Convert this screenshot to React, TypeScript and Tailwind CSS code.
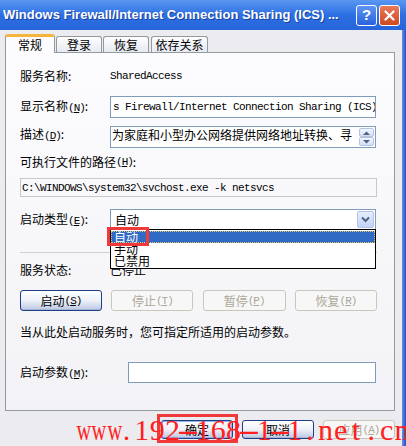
import type { ReactNode } from "react";

// XP 风格的服务属性对话框（常规页）
const mono = "font-['Liberation_Mono',monospace] text-[11px] tracking-[-0.6px]";

function Key({ k }: { k: string }) {
  return (
    <span className="font-['Liberation_Mono',monospace] text-[11px] tracking-[-1px]">
      (<span className="underline underline-offset-1">{k}</span>)
    </span>
  );
}

function XpButton({
  children,
  disabled = false,
  isDefault = false,
  className = "",
}: {
  children: ReactNode;
  disabled?: boolean;
  isDefault?: boolean;
  className?: string;
}) {
  if (disabled) {
    return (
      <div
        className={`flex items-center justify-center rounded-[3px] border border-[#c9c7ba] bg-[#f7f7f7] text-[#aca899] ${className}`}
      >
        {children}
      </div>
    );
  }
  return (
    <div
      className={`flex items-center justify-center rounded-[3px] border border-[#1d3f86] bg-gradient-to-b from-[#ffffff] via-[#eef1f8] to-[#bcc7e2] text-black ${
        isDefault ? "shadow-[inset_0_0_0_1px_#8fb1ec]" : "shadow-[inset_0_-1px_0_#a9b6d6]"
      } ${className}`}
    >
      {children}
    </div>
  );
}

function ScrollBtn({ up }: { up: boolean }) {
  return (
    <div className="flex h-[9px] w-[15px] items-center justify-center rounded-[2px] border border-[#b3c3e6] bg-gradient-to-b from-[#f2f6ff] to-[#d4def4]">
      <svg width="7" height="4" viewBox="0 0 7 4">
        {up ? <path d="M0 4 L3.5 0.5 L7 4 Z" fill="#4d6185" /> : <path d="M0 0 L3.5 3.5 L7 0 Z" fill="#4d6185" />}
      </svg>
    </div>
  );
}

function Watermark() {
  const chars = "www.192-168-1-1.net.cn".split("");
  return (
    <div className="pointer-events-none absolute left-[73px] top-[415px] flex whitespace-nowrap font-['Liberation_Serif',serif] text-[30px] leading-[30px] text-[#ff1f1f]">
      {chars.map((c, i) => (
        <span key={i} className="inline-block w-[15.3px] text-center">
          {c === "w" ? (
            <span className="inline-block scale-x-[0.68]">w</span>
          ) : c === "-" ? (
            <span className="inline-block scale-x-[2.3]">-</span>
          ) : (
            c
          )}
        </span>
      ))}
    </div>
  );
}

export default function App() {
  return (
    <div className="relative h-[446px] w-[406px] overflow-hidden bg-[#ecebef] font-['Noto_Sans_CJK_SC',sans-serif] text-[12px] leading-[16px] text-black">
      {/* 标题栏 */}
      <div className="flex h-[30px] items-center bg-gradient-to-b from-[#5a97f2] via-[#2c6fe2] to-[#2765da] pl-[3px] pr-[6px]">
        <div className="flex-1 truncate font-['Liberation_Sans',sans-serif] text-[13px] font-bold text-white [text-shadow:1px_1px_0_#1a3f9a]">
          Windows Firewall/Internet Connection Sharing (ICS) ...
        </div>
        <div className="flex gap-[2px]">
          <div className="flex h-[21px] w-[21px] items-center justify-center rounded-[3px] border border-white bg-gradient-to-b from-[#5d94f2] to-[#2a62dc] font-['Liberation_Sans',sans-serif] text-[15px] font-bold text-white">
            ?
          </div>
          <div className="flex h-[21px] w-[21px] items-center justify-center rounded-[3px] border border-white bg-gradient-to-b from-[#e87a58] to-[#cf4720]">
            <svg width="11" height="11" viewBox="0 0 11 11">
              <path d="M1.5 1.5 L9.5 9.5 M9.5 1.5 L1.5 9.5" stroke="white" strokeWidth="2.2" strokeLinecap="round" />
            </svg>
          </div>
        </div>
      </div>

      <div className="flex h-[416px]">
        <div className="flex w-[402px] flex-col">
          {/* 选项卡 */}
          <div className="relative z-10 mt-[3px] flex h-[19px] items-end pl-[5px]">
            <div className="-mb-px flex h-[19px] w-[50px] items-center justify-center rounded-t-[3px] border border-b-0 border-[#919b9c] border-t-[3px] border-t-[#f5b53c] bg-[#fcfcfe] pb-[1px]">
              常规
            </div>
            <div className="ml-px flex h-[16px] w-[46px] items-center justify-center rounded-t-[3px] border border-b-0 border-[#919b9c] bg-gradient-to-b from-white to-[#e6e9f2]">
              登录
            </div>
            <div className="ml-px flex h-[16px] w-[46px] items-center justify-center rounded-t-[3px] border border-b-0 border-[#919b9c] bg-gradient-to-b from-white to-[#e6e9f2]">
              恢复
            </div>
            <div className="ml-[2px] flex h-[16px] w-[57px] items-center justify-center rounded-t-[3px] border border-b-0 border-[#919b9c] bg-gradient-to-b from-white to-[#e6e9f2]">
              依存关系
            </div>
          </div>

          {/* 面板 */}
          <div className="ml-[5px] flex h-[359px] w-[390px] flex-col border border-[#919b9c] bg-gradient-to-b from-[#fcfcfe] to-[#f3f3f7] pl-[14px] pr-[17px]">
            <div className="mt-[15px] flex h-[16px] items-center">
              <div className="w-[90px]">服务名称:</div>
              <div className={mono}>SharedAccess</div>
            </div>

            <div className="mt-[12px] flex items-center">
              <div className="w-[90px]">
                显示名称<Key k="N" />:
              </div>
              <div className={`flex h-[22px] w-[266px] items-center overflow-hidden whitespace-nowrap border border-[#7f9db9] bg-white pl-[2px] ${mono}`}>
                s Firewall/Internet Connection Sharing (ICS)
              </div>
            </div>

            <div className="mt-[8px] flex items-start">
              <div className="w-[90px] pt-[-1px]">
                描述<Key k="D" />:
              </div>
              <div className="flex h-[22px] w-[266px] border border-[#7f9db9] bg-white">
                <div className="flex-1 overflow-hidden whitespace-nowrap pl-[1px] pt-px leading-[14px]">
                  为家庭和小型办公网络提供网络地址转换、寻
                </div>
                <div className="flex w-[16px] flex-col justify-between py-px">
                  <ScrollBtn up />
                  <ScrollBtn up={false} />
                </div>
              </div>
            </div>

            <div className="mt-[6px] flex h-[16px] items-center">
              可执行文件的路径<Key k="H" />:
            </div>

            <div className={`mt-[8px] flex h-[19px] items-center border border-[#c8c8cc] pl-px ${mono}`}>
              C:\WINDOWS\system32\svchost.exe -k netsvcs
            </div>

            <div className="mt-[12px] flex items-center">
              <div className="w-[90px]">
                启动类型<Key k="E" />:
              </div>
              <div className="relative flex h-[21px] w-[266px] border border-[#7f9db9] bg-white">
                <div className="flex flex-1 items-center pl-[4px]">自动</div>
                <div className="m-px flex w-[17px] items-center justify-center rounded-[2px] border border-[#b3c3e6] bg-gradient-to-b from-[#e6eeff] to-[#c3d3f6]">
                  <svg width="9" height="7" viewBox="0 0 9 7">
                    <path d="M1 1.5 L4.5 5 L8 1.5" stroke="#4d6185" strokeWidth="2" fill="none" />
                  </svg>
                </div>

                {/* 下拉列表 */}
                <div className="absolute left-[-1px] top-[19px] z-20 flex w-[266px] flex-col border border-black bg-white py-px leading-[12px]">
                  <div className="h-[12px] bg-[#316ac5] pl-[3px] text-white outline-1 -outline-offset-1 outline-dotted outline-[#e8c86a]">
                    自动
                  </div>
                  <div className="h-[12px] pl-[3px]">手动</div>
                  <div className="h-[12px] pl-[3px]">已禁用</div>
                </div>
                <div className="absolute left-[-4px] top-[17px] z-30 h-[19px] w-[42px] border-[3px] border-[#f03a3a]" />
              </div>
            </div>

            <div className="mt-[22px] h-px bg-[#cfcfd4]" />

            <div className="mt-[9px] flex h-[16px] items-center">
              <div className="w-[90px]">服务状态:</div>
              <div>已停止</div>
            </div>

            <div className="mt-[12px] flex h-[21px] justify-between">
              <XpButton className="w-[82px]">
                启动<Key k="S" />
              </XpButton>
              <XpButton disabled className="w-[82px]">
                停止<Key k="T" />
              </XpButton>
              <XpButton disabled className="w-[83px]">
                暂停<Key k="P" />
              </XpButton>
              <XpButton disabled className="w-[82px]">
                恢复<Key k="R" />
              </XpButton>
            </div>

            <div className="mt-[13px] flex h-[16px] items-center">当从此处启动服务时，您可指定所适用的启动参数。</div>

            <div className="mt-[22px] flex items-center">
              <div className="w-[108px]">
                启动参数<Key k="M" />:
              </div>
              <div className="h-[21px] w-[248px] border border-[#7f9db9] bg-white" />
            </div>
          </div>

          {/* 底部按钮 */}
          <div className="mt-[9px] flex justify-end gap-[9px] pr-[7px]">
            <XpButton isDefault className="h-[19px] w-[72px]">
              确定
            </XpButton>
            <XpButton className="h-[19px] w-[72px]">取消</XpButton>
            <XpButton disabled className="h-[19px] w-[72px]">
              应用<Key k="A" />
            </XpButton>
          </div>
        </div>
        <div className="w-[4px] bg-gradient-to-r from-[#6f8ed6] to-[#1d4fc9]" />
      </div>

      <div className="pointer-events-none absolute left-[157px] top-[414px] h-[29px] w-[81px] border-[3px] border-[#f03a3a]" />
      <Watermark />
    </div>
  );
}
